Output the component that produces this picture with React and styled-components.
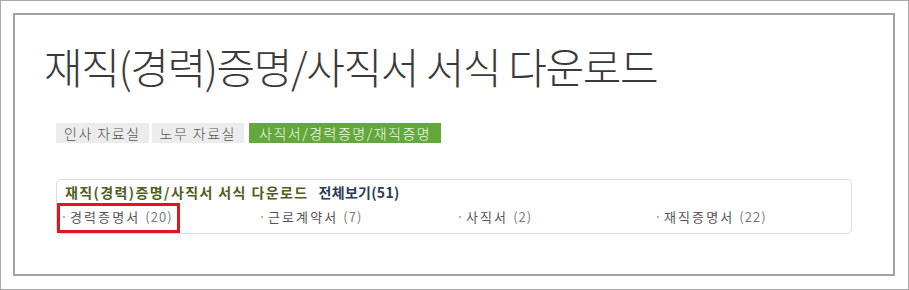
import React from 'react';
import styled, { createGlobalStyle } from 'styled-components';

const GlobalStyle = createGlobalStyle`
  html, body {
    margin: 0;
    padding: 0;
    background: #fff;
  }
  body {
    font-family: "Noto Sans CJK KR", "Noto Sans", sans-serif;
  }
`;

const Frame = styled.div`
  box-sizing: border-box;
  width: 909px;
  height: 290px;
  border: 1px solid #a8a8a8;
  padding: 12px 0 0 12px;
  background: #fff;
`;

const Sheet = styled.div`
  box-sizing: border-box;
  width: 882px;
  height: 263px;
  border: 2px solid #a2a2a2;
  padding: 0 0 0 41px;
  display: flex;
  flex-direction: column;
  align-items: flex-start;
`;

const Title = styled.h1`
  margin: 28px 0 0 -12px;
  font-size: 42px;
  line-height: 46px;
  font-weight: 300;
  letter-spacing: -1.4px;
  color: #3a3a3a;
  white-space: nowrap;
`;

const Tabs = styled.div`
  display: flex;
  gap: 3px;
  margin-top: 34px;
`;

const Tab = styled.a`
  display: block;
  height: 20px;
  line-height: 20px;
  padding: 0 ${(p) => p.$pad}px;
  font-size: 14px;
  font-weight: 300;
  letter-spacing: 1.5px;
  white-space: nowrap;
  background: ${(p) => (p.$active ? '#63a83a' : '#ececec')};
  color: ${(p) => (p.$active ? '#f4f9ee' : '#555')};
  margin-left: ${(p) => (p.$active ? 2 : 0)}px;
`;

const Panel = styled.section`
  box-sizing: border-box;
  width: 796px;
  height: 55px;
  margin-top: 36px;
  border: 1px solid #dcdcdc;
  border-radius: 5px;
  padding: 2px 0 0 8px;
`;

const Heading = styled.div`
  display: flex;
  gap: 10px;
  height: 20px;
  line-height: 20px;
  font-size: 14px;
  font-weight: 700;
  letter-spacing: 1.4px;
  white-space: nowrap;
`;

const HeadTitle = styled.span`
  color: #4f5e1c;
`;

const ViewAll = styled.span`
  color: #2d3a55;
  letter-spacing: 0.3px;
`;

const Items = styled.ul`
  list-style: none;
  margin: 5px 0 0 -2px;
  padding: 0;
  display: grid;
  grid-template-columns: repeat(4, 198px);
`;

const Item = styled.li`
  position: relative;
  justify-self: start;
  display: flex;
  align-items: center;
  gap: 5px;
  height: 19px;
  font-size: 13px;
  letter-spacing: 2.1px;
  color: #555;
  white-space: nowrap;

  &::before {
    content: '';
    width: 2px;
    height: 2px;
    background: #b5b5b5;
  }

  ${(p) =>
    p.$marked &&
    `
    &::after {
      content: '';
      position: absolute;
      left: -6px;
      right: -7px;
      top: -4px;
      bottom: -7px;
      border: 3px solid #e3141c;
      pointer-events: none;
    }
  `}
`;

const Count = styled.span`
  color: #7a7a7a;
  letter-spacing: 1px;
`;

const tabs = [
  { label: '인사 자료실', pad: 8 },
  { label: '노무 자료실', pad: 8 },
  { label: '사직서/경력증명/재직증명', pad: 10, active: true },
];

const forms = [
  { name: '경력증명서', count: 20, marked: true },
  { name: '근로계약서', count: 7 },
  { name: '사직서', count: 2 },
  { name: '재직증명서', count: 22 },
];

export default function App() {
  return (
    <>
      <GlobalStyle />
      <Frame>
        <Sheet>
          <Title>재직(경력)증명/사직서 서식 다운로드</Title>
          <Tabs>
            {tabs.map((t) => (
              <Tab key={t.label} $pad={t.pad} $active={t.active}>
                {t.label}
              </Tab>
            ))}
          </Tabs>
          <Panel>
            <Heading>
              <HeadTitle>재직(경력)증명/사직서 서식 다운로드</HeadTitle>
              <ViewAll>전체보기(51)</ViewAll>
            </Heading>
            <Items>
              {forms.map((f) => (
                <Item key={f.name} $marked={f.marked}>
                  {f.name} <Count>({f.count})</Count>
                </Item>
              ))}
            </Items>
          </Panel>
        </Sheet>
      </Frame>
    </>
  );
}
